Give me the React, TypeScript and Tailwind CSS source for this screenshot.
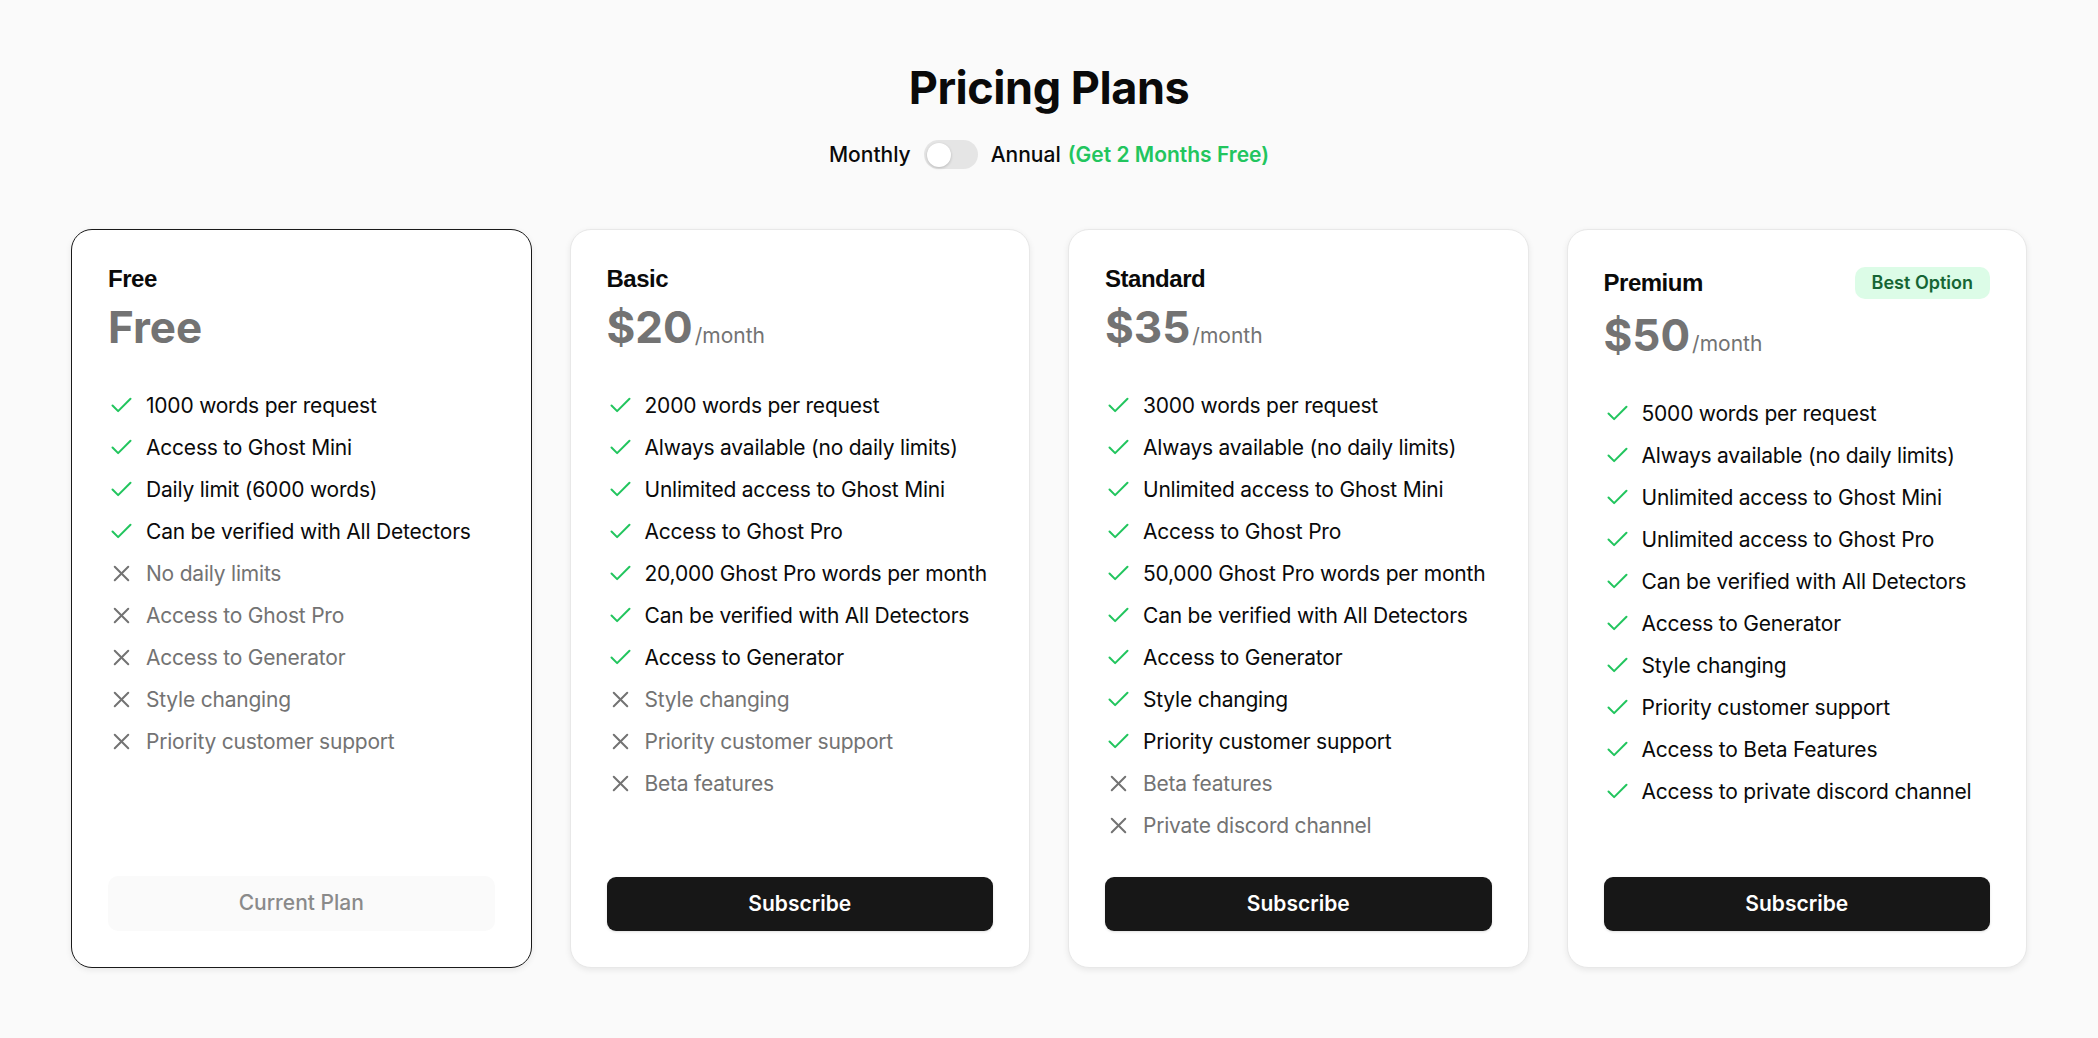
import { Check, X } from 'lucide-react';

type Feature = { text: string; ok: boolean };

type Plan = {
  name: string;
  price: string;
  perMonth: boolean;
  badge?: string;
  current?: boolean;
  features: Feature[];
};

const yes = (text: string): Feature => ({ text, ok: true });
const no = (text: string): Feature => ({ text, ok: false });

const plans: Plan[] = [
  {
    name: 'Free',
    price: 'Free',
    perMonth: false,
    current: true,
    features: [
      yes('1000 words per request'),
      yes('Access to Ghost Mini'),
      yes('Daily limit (6000 words)'),
      yes('Can be verified with All Detectors'),
      no('No daily limits'),
      no('Access to Ghost Pro'),
      no('Access to Generator'),
      no('Style changing'),
      no('Priority customer support'),
    ],
  },
  {
    name: 'Basic',
    price: '$20',
    perMonth: true,
    features: [
      yes('2000 words per request'),
      yes('Always available (no daily limits)'),
      yes('Unlimited access to Ghost Mini'),
      yes('Access to Ghost Pro'),
      yes('20,000 Ghost Pro words per month'),
      yes('Can be verified with All Detectors'),
      yes('Access to Generator'),
      no('Style changing'),
      no('Priority customer support'),
      no('Beta features'),
    ],
  },
  {
    name: 'Standard',
    price: '$35',
    perMonth: true,
    features: [
      yes('3000 words per request'),
      yes('Always available (no daily limits)'),
      yes('Unlimited access to Ghost Mini'),
      yes('Access to Ghost Pro'),
      yes('50,000 Ghost Pro words per month'),
      yes('Can be verified with All Detectors'),
      yes('Access to Generator'),
      yes('Style changing'),
      yes('Priority customer support'),
      no('Beta features'),
      no('Private discord channel'),
    ],
  },
  {
    name: 'Premium',
    price: '$50',
    perMonth: true,
    badge: 'Best Option',
    features: [
      yes('5000 words per request'),
      yes('Always available (no daily limits)'),
      yes('Unlimited access to Ghost Mini'),
      yes('Unlimited access to Ghost Pro'),
      yes('Can be verified with All Detectors'),
      yes('Access to Generator'),
      yes('Style changing'),
      yes('Priority customer support'),
      yes('Access to Beta Features'),
      yes('Access to private discord channel'),
    ],
  },
];

function PlanCard({ plan }: { plan: Plan }) {
  return (
    <div
      className={`flex flex-col rounded-[21px] bg-white px-9 pt-[37px] pb-9 shadow-[0_2px_6px_rgba(0,0,0,0.08)] border ${
        plan.current ? 'border-[#1a1a1a]' : 'border-[#e8e8e8]'
      }`}
    >
      <div className="flex items-center justify-between">
        <h3 className="font-['Liberation_Sans',Arial,sans-serif] text-[24px] leading-[24px] font-bold text-[#0a0a0a] tracking-[-0.02em]">
          {plan.name}
        </h3>
        {plan.badge && (
          <span className="h-8 px-[17px] rounded-[10px] bg-[#dcfce7] text-[#166534] text-[18px] font-semibold flex items-center">
            {plan.badge}
          </span>
        )}
      </div>

      <div className="mt-[14px] flex h-[44px] items-baseline">
        <span className="text-[44px] leading-[44px] font-bold text-[#737373]">{plan.price}</span>
        {plan.perMonth && <span className="ml-0.5 text-[21px] leading-[21px] text-[#737373]">/month</span>}
      </div>

      <ul className="mt-[41px] flex flex-1 flex-col gap-[10px]">
        {plan.features.map((f) => (
          <li
            key={f.text}
            className="flex items-center gap-[11px] whitespace-nowrap text-[21px] leading-[32px] tracking-[-0.01em]"
          >
            {f.ok ? (
              <Check size={27} strokeWidth={1.8} className="shrink-0 text-[#22c55e]" />
            ) : (
              <X size={27} strokeWidth={1.8} className="shrink-0 text-[#737373]" />
            )}
            <span className={f.ok ? 'text-[#0a0a0a]' : 'text-[#737373]'}>{f.text}</span>
          </li>
        ))}
      </ul>

      {plan.current ? (
        <button className="mt-[35px] h-[55px] rounded-[10px] bg-[#fafafa] text-[21px] font-medium text-[#8a8a8a]">
          Current Plan
        </button>
      ) : (
        <button className="mt-[35px] h-[54px] rounded-[9px] bg-[#171717] text-[21px] font-semibold text-white shadow-sm">
          Subscribe
        </button>
      )}
    </div>
  );
}

export default function App() {
  return (
    <div className="min-h-screen bg-[#fafafa] font-['Inter','Noto_Sans',sans-serif] pt-[65px] pb-[72px]">
      <h1 className="text-center text-[45px] leading-[45px] font-bold text-[#0a0a0a] tracking-[-0.01em]">
        Pricing Plans
      </h1>

      <div className="mt-[29px] flex items-center justify-center text-[21px] font-medium text-[#0a0a0a]">
        <span>Monthly</span>
        <div className="mx-[13px] flex h-[29px] w-[54px] items-center rounded-full bg-[#e5e5e5] px-[3px]">
          <div className="h-6 w-6 rounded-full bg-white shadow-[0_1px_3px_rgba(0,0,0,0.2)]" />
        </div>
        <span>Annual</span>
        <span className="ml-[7px] font-semibold text-[#22c55e]">(Get 2 Months Free)</span>
      </div>

      <div className="mt-[58px] grid grid-cols-4 gap-[38px] px-[71px]">
        {plans.map((p) => (
          <PlanCard key={p.name} plan={p} />
        ))}
      </div>
    </div>
  );
}
